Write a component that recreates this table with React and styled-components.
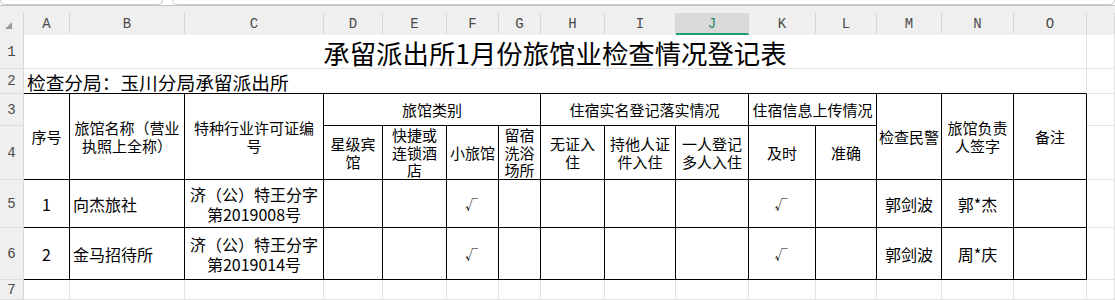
import React from 'react'
import styled, { createGlobalStyle } from 'styled-components'

const GlobalStyle = createGlobalStyle`
  html, body {
    margin: 0;
    padding: 0;
    background: #fff;
    overflow: hidden;
  }
  body {
    font-family: "Noto Sans CJK SC", "Noto Sans", sans-serif;
    color: #000;
  }
`

const CJK = '"Noto Sans CJK SC", "Noto Sans", sans-serif'

const Screen = styled.div`
  width: 1115px;
  height: 300px;
  overflow: hidden;
  background: #fff;
`

const FormulaStrip = styled.div`
  display: flex;
  gap: 9px;
  height: 5px;
  border-bottom: 1px solid #c4c4c4;
  background: #fff;
`

const FieldBox = styled.div`
  box-sizing: border-box;
  height: 5px;
  width: ${({ $w }) => ($w ? `${$w}px` : 'auto')};
  flex: ${({ $w }) => ($w ? 'none' : '1')};
  border: 1px solid #c8c8c8;
  border-top: none;
  border-radius: 0 0 5px 5px;
  background: #fff;
`

const HeaderGap = styled.div`
  height: 7px;
  background: #efefef;
`

const Sheet = styled.div`
  display: grid;
  grid-template-columns: 24px 46px 115px 139px 59px 64px 52px 42px 64px 71px 73px 67px 61px 65px 72px 73px 1fr;
  grid-template-rows: 22px 34px 25px 32px 54px 48px 52px 20px 30px;
`

const Corner = styled.div`
  grid-column: 1;
  grid-row: 1;
  background: #efefef;
  border-right: 1px solid #d6d6d6;
  display: flex;
  align-items: flex-end;
  padding: 0 0 6px 5px;
  box-sizing: border-box;

  &::after {
    content: '';
    width: 0;
    height: 0;
    border-left: 7px solid transparent;
    border-bottom: 7px solid #9a9a9a;
  }
`

const ColHead = styled.div`
  grid-row: 1;
  box-sizing: border-box;
  display: flex;
  align-items: center;
  justify-content: center;
  background: ${({ $active }) => ($active ? '#d9d9d9' : '#efefef')};
  border-right: 1px solid #d6d6d6;
  border-bottom: 2px solid ${({ $active }) => ($active ? '#1f9d6c' : '#efefef')};
  color: ${({ $active }) => ($active ? '#1c8b5e' : '#4a4a4a')};
  font-family: "Liberation Mono", "DejaVu Sans Mono", monospace;
  font-size: 14px;
  padding-top: 2px;
`

const RowHead = styled.div`
  grid-column: 1;
  grid-row: ${({ $row }) => $row};
  box-sizing: border-box;
  display: flex;
  align-items: center;
  justify-content: center;
  background: #efefef;
  border-bottom: 1px solid #dcdcdc;
  border-right: 1px solid #d6d6d6;
  color: #4a4a4a;
  font-family: "Liberation Mono", "DejaVu Sans Mono", monospace;
  font-size: 14px;
`

const Cell = styled.div`
  grid-column: ${({ $col }) => $col} / span ${({ $span = 1 }) => $span};
  grid-row: ${({ $row }) => $row} / span ${({ $rspan = 1 }) => $rspan};
  box-sizing: border-box;
  display: flex;
  align-items: center;
  justify-content: ${({ $left }) => ($left ? 'flex-start' : 'center')};
  text-align: ${({ $left }) => ($left ? 'left' : 'center')};
  padding: 0 ${({ $tight }) => ($tight ? '1px' : '3px')};
  border-right: 1px solid ${({ $edge }) => ($edge ? '#000' : '#e2e2e2')};
  border-bottom: 1px solid ${({ $base }) => ($base ? '#000' : '#e2e2e2')};
  font-family: ${CJK};
  font-size: 15px;
  line-height: 17.5px;
  word-break: break-all;
`

const Title = styled(Cell)`
  font-size: 26.4px;
  line-height: 30px;
  padding-top: 2px;
`

const Unit = styled(Cell)`
  font-size: 18.7px;
  line-height: 22px;
  padding-top: 1px;
`

const Data = styled(Cell)`
  font-size: 16px;
  line-height: 20px;
`

const Tick = styled.span`
  font-family: ${CJK};
  font-size: 13px;
  margin-left: -2px;
`

const letters = ['A', 'B', 'C', 'D', 'E', 'F', 'G', 'H', 'I', 'J', 'K', 'L', 'M', 'N', 'O', '']

const subHeads = [
  { col: 5, text: '星级宾馆' },
  { col: 6, text: '快捷或连锁酒店' },
  { col: 7, text: '小旅馆' },
  { col: 8, text: '留宿洗浴场所' },
  { col: 9, text: '无证入住' },
  { col: 10, text: '持他人证件入住' },
  { col: 11, text: '一人登记多人入住' },
  { col: 12, text: '及时' },
  { col: 13, text: '准确' },
]

const hotels = [
  { row: 6, no: '1', name: '向杰旅社', permit: '济（公）特王分字第2019008号', police: '郭剑波', owner: '郭*杰' },
  { row: 7, no: '2', name: '金马招待所', permit: '济（公）特王分字第2019014号', police: '郭剑波', owner: '周*庆' },
]

const App = () => (
  <Screen>
    <GlobalStyle />
    <FormulaStrip>
      <FieldBox $w={163} />
      <FieldBox />
    </FormulaStrip>
    <HeaderGap />
    <Sheet>
      <Corner />
      {letters.map((l, i) => (
        <ColHead key={i} style={{ gridColumn: i + 2 }} $active={l === 'J'}>{l}</ColHead>
      ))}

      {[1, 2, 3, 4, 5, 6, 7].map((n) => (
        <RowHead key={n} $row={n + 1}>{n}</RowHead>
      ))}

      <Title $col={2} $span={15} $row={2}>承留派出所1月份旅馆业检查情况登记表</Title>
      <Cell $col={17} $row={2} />
      <Unit $col={2} $span={15} $row={3} $left $base>检查分局：玉川分局承留派出所</Unit>
      <Cell $col={17} $row={3} />

      <Cell $col={2} $row={4} $rspan={2} $edge $base>序号</Cell>
      <Cell $col={3} $row={4} $rspan={2} $edge $base>旅馆名称（营业执照上全称）</Cell>
      <Cell $col={4} $row={4} $rspan={2} $edge $base>特种行业许可证编号</Cell>
      <Cell $col={5} $span={4} $row={4} $edge $base>旅馆类别</Cell>
      <Cell $col={9} $span={3} $row={4} $edge $base>住宿实名登记落实情况</Cell>
      <Cell $col={12} $span={2} $row={4} $edge $base>住宿信息上传情况</Cell>
      <Cell $col={14} $row={4} $rspan={2} $edge $base $tight>检查民警</Cell>
      <Cell $col={15} $row={4} $rspan={2} $edge $base>旅馆负责人签字</Cell>
      <Cell $col={16} $row={4} $rspan={2} $edge $base>备注</Cell>
      <Cell $col={17} $row={4} />
      {subHeads.map((h) => (
        <Cell key={h.col} $col={h.col} $row={5} $edge $base>{h.text}</Cell>
      ))}
      <Cell $col={17} $row={5} />

      {hotels.map((h) => (
        <React.Fragment key={h.no}>
          <Data $col={2} $row={h.row} $edge $base>{h.no}</Data>
          <Data $col={3} $row={h.row} $edge $base $left>{h.name}</Data>
          <Data $col={4} $row={h.row} $edge $base>{h.permit}</Data>
          <Data $col={5} $row={h.row} $edge $base />
          <Data $col={6} $row={h.row} $edge $base />
          <Data $col={7} $row={h.row} $edge $base><Tick>√</Tick></Data>
          <Data $col={8} $row={h.row} $edge $base />
          <Data $col={9} $row={h.row} $edge $base />
          <Data $col={10} $row={h.row} $edge $base />
          <Data $col={11} $row={h.row} $edge $base />
          <Data $col={12} $row={h.row} $edge $base><Tick>√</Tick></Data>
          <Data $col={13} $row={h.row} $edge $base />
          <Data $col={14} $row={h.row} $edge $base>{h.police}</Data>
          <Data $col={15} $row={h.row} $edge $base>{h.owner}</Data>
          <Data $col={16} $row={h.row} $edge $base />
          <Cell $col={17} $row={h.row} />
        </React.Fragment>
      ))}

      {letters.map((l, i) => (
        <Cell key={`r7-${i}`} $col={i + 2} $row={8} />
      ))}
    </Sheet>
  </Screen>
)

export default App
